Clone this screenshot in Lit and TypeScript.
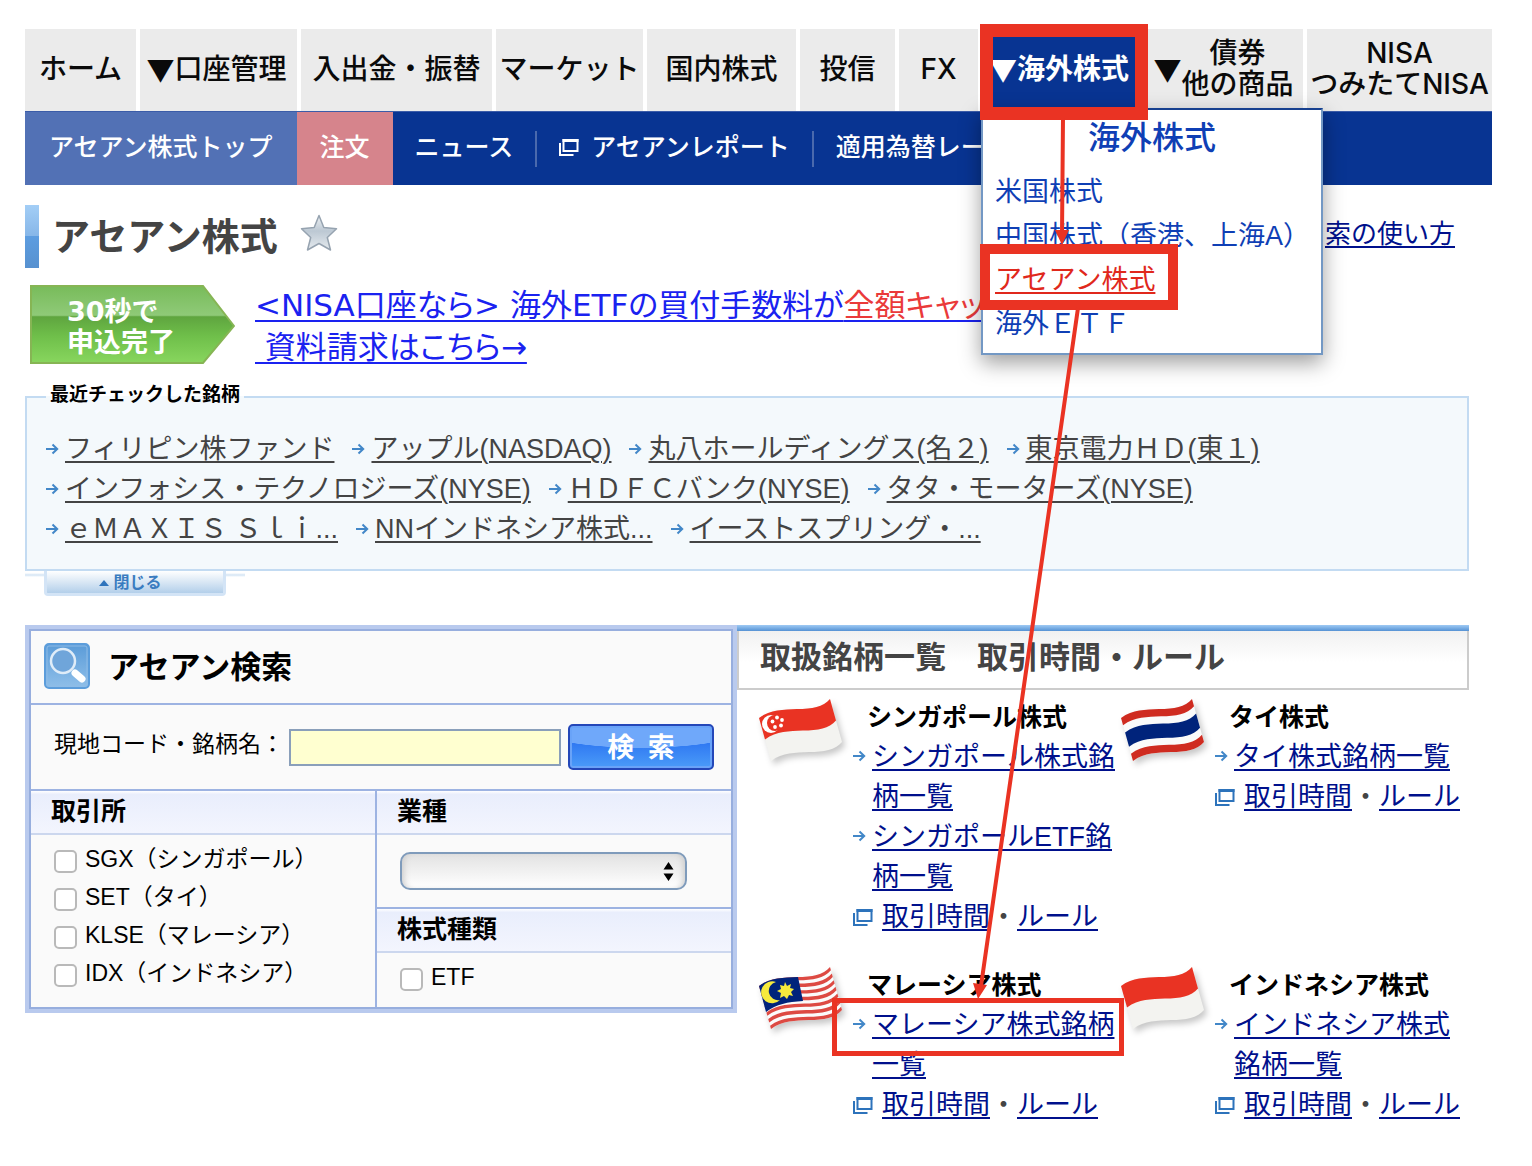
import { LitElement, html, svg, css, nothing } from "lit";
import { customElement, property } from "lit/decorators.js";

type Stripe = { from: number; to: number; color: string };
type Country = {
  flag: string;
  name: string;
  lists: string[];
};

const NAV = [
  { lines: ["ホーム"] },
  { lines: ["口座管理"], menu: true },
  { lines: ["入出金・振替"] },
  { lines: ["マーケット"] },
  { lines: ["国内株式"] },
  { lines: ["投信"] },
  { lines: ["FX"] },
  { lines: ["海外株式"], menu: true, active: true },
  { lines: ["債券", "他の商品"], menu: true },
  { lines: ["NISA", "つみたてNISA"] },
];

const RECENT = [
  "フィリピン株ファンド",
  "アップル(NASDAQ)",
  "丸八ホールディングス(名２)",
  "東京電力ＨＤ(東１)",
  "インフォシス・テクノロジーズ(NYSE)",
  "ＨＤＦＣバンク(NYSE)",
  "タタ・モーターズ(NYSE)",
  "ｅＭＡＸＩＳ Ｓｌｉ...",
  "NNインドネシア株式...",
  "イーストスプリング・...",
];

const EXCHANGES = [
  { id: "sgx", label: "SGX（シンガポール）" },
  { id: "set", label: "SET（タイ）" },
  { id: "klse", label: "KLSE（マレーシア）" },
  { id: "idx", label: "IDX（インドネシア）" },
];

const COUNTRIES: Country[] = [
  { flag: "sg", name: "シンガポール株式", lists: ["シンガポール株式銘柄一覧", "シンガポールETF銘柄一覧"] },
  { flag: "th", name: "タイ株式", lists: ["タイ株式銘柄一覧"] },
  { flag: "my", name: "マレーシア株式", lists: ["マレーシア株式銘柄一覧"] },
  { flag: "id", name: "インドネシア株式", lists: ["インドネシア株式銘柄一覧"] },
];

/* The flag cloth is one wavy edge slid along the vector (12, 43). */
const band = (t0: number, t1: number) => {
  const p = (x: number, y: number, t: number) => `${x + 12 * t} ${y + 43 * t}`;
  return (
    `M${p(2, 21, t0)}C${p(14, 12, t0)} ${p(26, 13, t0)} ${p(40, 12, t0)}` +
    `C${p(55, 12, t0)} ${p(66, 10, t0)} ${p(73, 2, t0)}L${p(73, 2, t1)}` +
    `C${p(66, 10, t1)} ${p(55, 12, t1)} ${p(40, 12, t1)}` +
    `C${p(26, 13, t1)} ${p(14, 12, t1)} ${p(2, 21, t1)}Z`
  );
};

const STRIPES: Record<string, Stripe[]> = {
  sg: [
    { from: 0, to: 1, color: "#f3f3f0" },
    { from: 0, to: 0.5, color: "#e93323" },
  ],
  id: [
    { from: 0, to: 1, color: "#f3f3f0" },
    { from: 0, to: 0.5, color: "#e93323" },
  ],
  th: [
    { from: 0, to: 1, color: "#fafafa" },
    { from: 0, to: 0.17, color: "#cf2b20" },
    { from: 0.34, to: 0.67, color: "#00237b" },
    { from: 0.83, to: 1, color: "#cf2b20" },
  ],
  my: [
    { from: 0, to: 1, color: "#fbfbfb" },
    ...[0, 1, 2, 3, 4, 5, 6].map((i) => ({
      from: (i * 2) / 13,
      to: (i * 2 + 1) / 13,
      color: "#dd4a43",
    })),
  ],
};

@customElement("wavy-flag")
class WavyFlag extends LitElement {
  @property() country = "sg";

  static styles = css`
    :host {
      display: block;
    }
    .flag {
      display: block;
      overflow: visible;
      filter: drop-shadow(3px 4px 3px rgba(0, 0, 0, 0.22));
    }
  `;

  private emblem() {
    if (this.country === "sg") {
      return svg`
        <circle cx="14" cy="27" r="9" fill="#fff"/>
        <circle cx="18" cy="26" r="8" fill="#e93323"/>
        <g fill="#fff">
          <circle cx="20" cy="20.500" r="1.9"/><circle cx="15.500" cy="24.500" r="1.9"/>
          <circle cx="25" cy="23" r="1.9"/><circle cx="18" cy="30" r="1.9"/>
          <circle cx="24" cy="28.500" r="1.9"/>
        </g>`;
    }
    if (this.country === "my") {
      return svg`
        <path d="M2 21C14 12 26 13 41 12L46 36C30 37 20 39 9 47Z" fill="#00237b"/>
        <path d="M19 17A11 11 0 1 0 23 35A9 9 0 1 1 19 17Z" fill="#f6ea3d"/>
        <path d="M28 17l2 4 4-2-1 4 4 1-3 3 2 4-4-1-2 4-3-3-4 2 1-5-4-2 4-2-1-4 4 1z" fill="#f6ea3d"/>`;
    }
    return nothing;
  }

  render() {
    return html`<svg class="flag" width="90" height="72" viewBox="0 0 90 72" aria-hidden="true">
      ${STRIPES[this.country].map((s) => svg`<path d=${band(s.from, s.to)} fill=${s.color}/>`)}
      ${this.emblem()}
    </svg>`;
  }
}

const arrowIcon = () => html`<svg class="arrow" width="13" height="12" viewBox="0 0 13 12" aria-hidden="true">
  <path d="M0 6H11M6.500 1.500L11.200 6L6.500 10.500" fill="none" stroke="#4287c8" stroke-width="2"/>
</svg>`;

const windowIcon = (color: string) => html`<svg class="window" width="20" height="18" viewBox="0 0 20 18" aria-hidden="true">
  <path d="M4.500 2H18.500V13H4.500Z" fill="none" stroke=${color} stroke-width="2"/>
  <path d="M3.500 1H19.500V4H3.500Z" fill=${color}/>
  <path d="M1 5V17H14.500" fill="none" stroke=${color} stroke-width="2"/>
</svg>`;

@customElement("app-root")
class AppRoot extends LitElement {
  static styles = css`
    :host {
      display: block;
      position: relative;
      overflow: hidden;
      background: #fff;
      color: #000;
      font-family: "Liberation Sans", "Noto Sans CJK JP", sans-serif;
      font-size: 27px;
      line-height: 40px;
    }
    * {
      box-sizing: border-box;
    }
    a {
      color: #00108c;
      text-decoration-thickness: 2px;
      text-underline-offset: 3px;
    }
    h1, h2, h3, p, ul {
      margin: 0;
      padding: 0;
    }
    ul {
      list-style: none;
    }
    .page {
      padding: 29px 40px 40px 25px;
    }

    /* global navigation */
    .nav {
      display: grid;
      grid-template-columns:
        minmax(0, 111fr) minmax(0, 157fr) minmax(0, 191fr) minmax(0, 147fr) minmax(0, 149fr)
        minmax(0, 95fr) minmax(0, 79fr) minmax(0, 162fr) minmax(0, 155fr) minmax(0, 185fr);
      gap: 4px;
      height: 82px;
    }
    .tab {
      display: flex;
      align-items: center;
      justify-content: center;
      overflow: hidden;
      padding-bottom: 2px;
      background: #ebebeb;
      color: #0a0a0a;
      font-family: Inter, "Noto Sans CJK JP", sans-serif;
      font-size: 28px;
      font-weight: 500;
      line-height: 31px;
      text-align: center;
      text-decoration: none;
      white-space: nowrap;
    }
    .tab.menu {
      padding-right: 4px;
    }
    .tab.active {
      background: #083492;
      color: #fff;
      font-weight: 700;
      padding-right: 8px;
    }
    .caret {
      font-family: "Noto Sans CJK JP", sans-serif;
    }
    .line {
      display: block;
    }

    /* section navigation */
    .subnav {
      display: flex;
      align-items: center;
      height: 74px;
      background: #083492;
      border-top: 1px solid #3b5ca8;
      font-size: 25px;
      white-space: nowrap;
    }
    .subnav a {
      display: flex;
      align-items: center;
      gap: 12px;
      height: 36px;
      padding: 0 22px 4px;
      color: #fff;
      font-weight: 500;
      text-decoration: none;
    }
    .subnav a.block {
      height: 100%;
      background: #5271b5;
      padding: 0 24px 4px;
    }
    .subnav a.order {
      background: #d6848c;
      padding: 0 23px 4px;
    }
    .subnav a.ruled {
      border-left: 2px solid #4a69ad;
    }

    /* page heading */
    .heading {
      display: flex;
      align-items: center;
      margin-top: 20px;
      height: 63px;
      padding-right: 37px;
    }
    .bar {
      align-self: stretch;
      width: 14px;
      margin-right: 13px;
      background: linear-gradient(#a3cef6, #86b6e8 50%, #5d9de0 50%, #5791d0);
    }
    h1 {
      color: #444;
      font-size: 38px;
      margin-right: 22px;
    }
    .star {
      margin-bottom: 8px;
    }
    .howto {
      margin-left: auto;
      padding-bottom: 5px;
      font-size: 26px;
    }

    /* campaign */
    .campaign {
      display: flex;
      margin-top: 16px;
      padding-left: 5px;
      height: 84px;
    }
    .badge {
      position: relative;
      width: 205px;
      height: 80px;
      margin: 1px 20px 0 0;
      flex: none;
    }
    .badge svg {
      display: block;
    }
    .badge p {
      position: absolute;
      left: 37px;
      top: 11px;
      color: #fff;
      font-family: "DejaVu Sans", "Noto Sans CJK JP", sans-serif;
      font-size: 27px;
      font-weight: 700;
      line-height: 31px;
      white-space: nowrap;
    }
    .offer {
      color: #1a22f0;
      font-family: "DejaVu Sans", "Noto Sans CJK JP", sans-serif;
      font-size: 31px;
      font-feature-settings: "palt";
      line-height: 42px;
      text-underline-offset: 4px;
      white-space: pre;
    }
    .offer em {
      color: #ea3a3a;
      font-style: normal;
    }

    /* recently viewed */
    .recent {
      min-width: 0;
      margin: 17px 23px 0 0;
      padding: 20px 19px;
      border: 2px solid #c3dbf2;
      background: #f4f9fc;
    }
    .recent legend {
      padding: 0 4px 4px;
      font-size: 19px;
      font-weight: 700;
      line-height: 20px;
    }
    .recent ul {
      display: flex;
      flex-wrap: wrap;
      column-gap: 18px;
    }
    .recent li {
      display: flex;
      align-items: center;
      gap: 6px;
      white-space: nowrap;
    }
    .recent a {
      color: #444;
    }
    .arrow, .window {
      flex: none;
    }
    .close-row {
      display: flex;
      width: 220px;
      height: 25px;
      justify-content: center;
      align-items: flex-start;
      background: linear-gradient(#fff 2px, #d3e4f4 4px, #fff 6px);
    }
    .close {
      display: flex;
      align-items: center;
      justify-content: center;
      gap: 4px;
      width: 182px;
      height: 25px;
      margin-right: 1px;
      padding: 2px 8px 0 0;
      border: 3px solid #d3e4f6;
      border-top: 0;
      border-radius: 0 0 4px 4px;
      background: linear-gradient(#fff, #b3cfea);
      color: #3a7cc0;
      font: 700 16px/20px "Liberation Sans", "Noto Sans CJK JP", sans-serif;
    }

    /* lower columns */
    .columns {
      display: grid;
      grid-template-columns: minmax(0, 712fr) minmax(0, 732fr);
      align-items: start;
      margin: 29px 23px 0 0;
    }
    .search {
      border: 4px solid #b9caee;
      background: #fafafa;
    }
    .frame {
      border: 2px solid #97aede;
    }
    .title {
      display: flex;
      align-items: center;
      gap: 18px;
      height: 74px;
      padding: 0 13px 2px;
      border-bottom: 2px solid #9db3e2;
    }
    .title h2 {
      padding-top: 3px;
      font-size: 31px;
    }
    .query {
      display: flex;
      align-items: center;
      height: 86px;
      padding: 0 17px 0 23px;
      border-bottom: 2px solid #9db3e2;
      font-size: 23px;
    }
    .query label {
      flex: none;
      width: 235px;
      padding-bottom: 6px;
      white-space: nowrap;
    }
    .code {
      flex: 1;
      min-width: 0;
      height: 37px;
      margin-right: 7px;
      border: 2px solid #8a9fba;
      border-radius: 0;
      background: #ffffd0;
      font-size: 23px;
    }
    .go {
      width: 146px;
      height: 46px;
      padding: 2px 0 0;
      border: 2px solid #2447b8;
      border-radius: 5px;
      background:
        radial-gradient(ellipse 110px 22px at 50% 0, #6fa8fa 98%, transparent),
        linear-gradient(#6fa8fa 38%, #2f78f2 40%, #4b9cf8);
      box-shadow: inset 0 0 0 2px #69a3f8;
      color: #fff;
      font: 700 27px/40px "Liberation Sans", "Noto Sans CJK JP", sans-serif;
    }
    .filters {
      display: grid;
      grid-template-columns: minmax(0, 346fr) minmax(0, 354fr);
    }
    .left {
      border-right: 2px solid #9db3e2;
    }
    .filters h3 {
      height: 44px;
      padding: 0 20px;
      border-bottom: 2px solid #ccd7ee;
      background: linear-gradient(#fff, #e9eefc 8%, #f3f5fe);
      font-size: 25px;
    }
    .checks {
      padding: 7px 23px 13px;
      font-size: 23px;
      line-height: 38px;
    }
    .check {
      display: flex;
      align-items: center;
      gap: 8px;
      height: 38px;
    }
    .check label {
      padding-bottom: 4px;
      white-space: nowrap;
    }
    .box {
      appearance: none;
      flex: none;
      width: 23px;
      height: 23px;
      margin: 0;
      border: 2px solid #b9b9b9;
      border-radius: 5px;
      background: #fff;
    }
    .box:checked {
      background: #5d9de0;
    }
    .sector {
      display: flex;
      height: 74px;
      padding: 17px 23px 0;
      border-bottom: 2px solid #9db3e2;
    }
    .picker {
      position: relative;
      width: 287px;
      height: 38px;
    }
    .picker select {
      display: block;
      appearance: none;
      width: 100%;
      height: 100%;
      margin: 0;
      padding: 0 34px 0 12px;
      border: 2px solid #7f9bbb;
      border-radius: 10px;
      background: linear-gradient(#e2e2e2, #fff);
      box-shadow: inset 6px 0 6px -4px #ccc, inset -6px 0 6px -4px #ccc;
      font-size: 23px;
    }
    .picker svg {
      position: absolute;
      right: 13px;
      top: 10px;
      pointer-events: none;
    }
    .kinds {
      padding: 7px 23px 0;
      font-size: 23px;
    }

    .markets {
      padding-top: 6px;
      background: linear-gradient(#9fcaf4, #5592d4) top / 100% 6px no-repeat;
    }
    .markets h2 {
      height: 59px;
      padding: 2px 21px 0;
      border: 2px solid #ccc;
      border-top: 0;
      background: linear-gradient(#f1f1f1, #fff 55%);
      color: #444;
      font-size: 31px;
      line-height: 50px;
      white-space: nowrap;
    }
    .grid {
      display: grid;
      grid-template-columns: minmax(0, 362fr) minmax(0, 350fr);
      row-gap: 28px;
      padding: 7px 0 0 20px;
    }
    .country {
      display: grid;
      grid-template-columns: 96px minmax(0, 1fr);
    }
    .country h3 {
      padding-left: 14px;
      font-size: 25px;
      white-space: nowrap;
    }
    .country li {
      display: flex;
      gap: 6px;
    }
    .country li.rule {
      gap: 9px;
      white-space: nowrap;
      color: #444;
    }
    .country .arrow {
      margin-top: 13px;
    }
    .country .window {
      margin-top: 11px;
    }

    /* drop-down menu and annotation, both above the page */
    .dropdown {
      position: absolute;
      left: 981px;
      top: 108px;
      width: 342px;
      padding: 6px 12px 7px;
      border: 2px solid #7398c4;
      border-top-color: #17408f;
      background: #fff;
      box-shadow: 0 8px 20px rgba(0, 0, 0, 0.38);
      line-height: 44px;
      white-space: nowrap;
    }
    .dropdown h2 {
      margin-bottom: 10px;
      color: #0f3fb5;
      font-size: 32px;
      font-weight: 500;
      text-align: center;
    }
    .dropdown a {
      color: #0f3fb5;
      text-decoration: none;
    }
    .dropdown a.current {
      color: #e0281c;
      text-decoration: underline 2px;
    }
    .marks {
      position: absolute;
      left: 0;
      top: 0;
      pointer-events: none;
    }
  `;

  private countryBlock(c: Country) {
    return html`<section class="country">
      <wavy-flag country=${c.flag}></wavy-flag>
      <div>
        <h3>${c.name}</h3>
        <ul>
          ${c.lists.map((l) => html`<li>${arrowIcon()}<a href="#">${l}</a></li>`)}
          <li class="rule">
            ${windowIcon("#2d73bb")}<span><a href="#">取引時間</a>・<a href="#">ルール</a></span>
          </li>
        </ul>
      </div>
    </section>`;
  }

  private check(id: string, label: string) {
    return html`<div class="check">
      <input class="box" type="checkbox" id=${id} /><label for=${id}>${label}</label>
    </div>`;
  }

  render() {
    return html`
      <div class="page">
        <nav class="nav">
          ${NAV.map(
            (n) => html`<a href="#" class="tab ${n.menu ? "menu" : ""} ${n.active ? "active" : ""}">
              ${n.menu ? html`<span class="caret">▼</span>` : nothing}
              <span>${n.lines.map((l) => html`<span class="line">${l}</span>`)}</span>
            </a>`
          )}
        </nav>
        <nav class="subnav">
          <a class="block" href="#">アセアン株式トップ</a>
          <a class="block order" href="#">注文</a>
          <a href="#">ニュース</a>
          <a class="ruled" href="#">${windowIcon("#ffffff")}アセアンレポート</a>
          <a class="ruled" href="#">適用為替レー</a>
        </nav>

        <div class="heading">
          <span class="bar"></span>
          <h1>アセアン株式</h1>
          <svg class="star" width="38" height="38" viewBox="0 0 38 38" aria-hidden="true">
            <defs>
              <linearGradient id="star" x1="0" y1="0" x2="0" y2="1">
                <stop offset="0" stop-color="#eef1f4" />
                <stop offset="0.45" stop-color="#bcc8d3" />
                <stop offset="1" stop-color="#e6ebef" />
              </linearGradient>
            </defs>
            <path
              d="M19 1.500L23.800 13.500L36.500 14.800L27.300 23.500L30.500 36L19 29.500L7.500 36L10.700 23.500L1.500 14.800L14.200 13.500Z"
              fill="url(#star)" stroke="#96a3b0" stroke-width="1.500" stroke-linejoin="round"
            />
          </svg>
          <a class="howto" href="#">索の使い方</a>
        </div>

        <div class="campaign">
          <div class="badge">
            <svg width="205" height="80" viewBox="0 0 205 80" aria-hidden="true">
              <defs>
                <linearGradient id="green" x1="0" y1="0" x2="0" y2="1">
                  <stop offset="0" stop-color="#78bb5a" />
                  <stop offset="0.38" stop-color="#8fca78" />
                  <stop offset="0.4" stop-color="#5fa53f" />
                  <stop offset="0.65" stop-color="#6fbf4a" />
                  <stop offset="1" stop-color="#88d65e" />
                </linearGradient>
              </defs>
              <path d="M1 1H173L204 41L173 78H1Z" fill="url(#green)" stroke="#86b554" stroke-width="2" />
            </svg>
            <p>30秒で<br />申込完了</p>
          </div>
          <a class="offer" href="#">&lt;NISA口座なら&gt; 海外ETFの買付手数料が<em>全額キャッ</em><br /> 資料請求はこちら→</a>
        </div>

        <fieldset class="recent">
          <legend>最近チェックした銘柄</legend>
          <ul>
            ${RECENT.map((r) => html`<li>${arrowIcon()}<a href="#">${r}</a></li>`)}
          </ul>
        </fieldset>
        <div class="close-row">
          <button class="close" type="button">
            <svg width="10" height="6" viewBox="0 0 10 6" aria-hidden="true"><path d="M0 6L5 0L10 6Z" fill="#2f74bc" /></svg>閉じる
          </button>
        </div>

        <div class="columns">
          <form class="search">
            <div class="frame">
              <div class="title">
                <svg width="46" height="46" viewBox="0 0 46 46" aria-hidden="true">
                  <defs>
                    <linearGradient id="lens" x1="0" y1="0" x2="0" y2="1">
                      <stop offset="0" stop-color="#5a9bd8" />
                      <stop offset="1" stop-color="#8fbfe9" />
                    </linearGradient>
                  </defs>
                  <rect x="1" y="1" width="44" height="44" rx="4" fill="url(#lens)" stroke="#5c9ddb" stroke-width="2" />
                  <rect x="3" y="3" width="40" height="40" rx="2" fill="none" stroke="#8ebbe6" />
                  <circle cx="19" cy="18" r="12" fill="#6fa5da" stroke="#dfecf8" stroke-width="2.500" />
                  <path d="M31 30L38 36" stroke="#fff" stroke-width="7" stroke-linecap="round" />
                </svg>
                <h2>アセアン検索</h2>
              </div>
              <div class="query">
                <label for="code">現地コード・銘柄名：</label>
                <input class="code" id="code" type="text" />
                <button class="go" type="button">検&ensp;索</button>
              </div>
              <div class="filters">
                <div class="left">
                  <h3>取引所</h3>
                  <div class="checks">${EXCHANGES.map((e) => this.check(e.id, e.label))}</div>
                </div>
                <div>
                  <h3 id="sector-title">業種</h3>
                  <div class="sector">
                    <div class="picker">
                      <select aria-labelledby="sector-title"><option></option></select>
                      <svg width="11" height="19" viewBox="0 0 11 19" aria-hidden="true">
                        <path d="M0.500 7.500L5.500 0L10.500 7.500ZM0.500 11.500L5.500 19L10.500 11.500Z" />
                      </svg>
                    </div>
                  </div>
                  <h3>株式種類</h3>
                  <div class="kinds">${this.check("etf", "ETF")}</div>
                </div>
              </div>
            </div>
          </form>

          <div class="markets">
            <h2>取扱銘柄一覧　取引時間・ルール</h2>
            <div class="grid">${COUNTRIES.map((c) => this.countryBlock(c))}</div>
          </div>
        </div>
      </div>

      <div class="dropdown">
        <h2>海外株式</h2>
        <ul>
          <li><a href="#">米国株式</a></li>
          <li><a href="#">中国株式（香港、上海A）</a></li>
          <li><a class="current" href="#">アセアン株式</a></li>
          <li><a href="#">海外ＥＴＦ</a></li>
        </ul>
      </div>

      <svg class="marks" width="1532" height="1166" viewBox="0 0 1532 1166" aria-hidden="true">
        <g fill="none" stroke="#ea3323">
          <rect x="986.500" y="30.500" width="155" height="83" stroke-width="13" />
          <rect x="985" y="249" width="188" height="56" stroke-width="10" />
          <rect x="834.500" y="1000.500" width="287" height="53" stroke-width="5" />
          <path d="M1063 118L1062 234M1078 308L981 986" stroke-width="4" />
        </g>
        <path d="M1055 230H1069L1062 245ZM973 983L987 985L978 999Z" fill="#ea3323" />
      </svg>
    `;
  }
}
